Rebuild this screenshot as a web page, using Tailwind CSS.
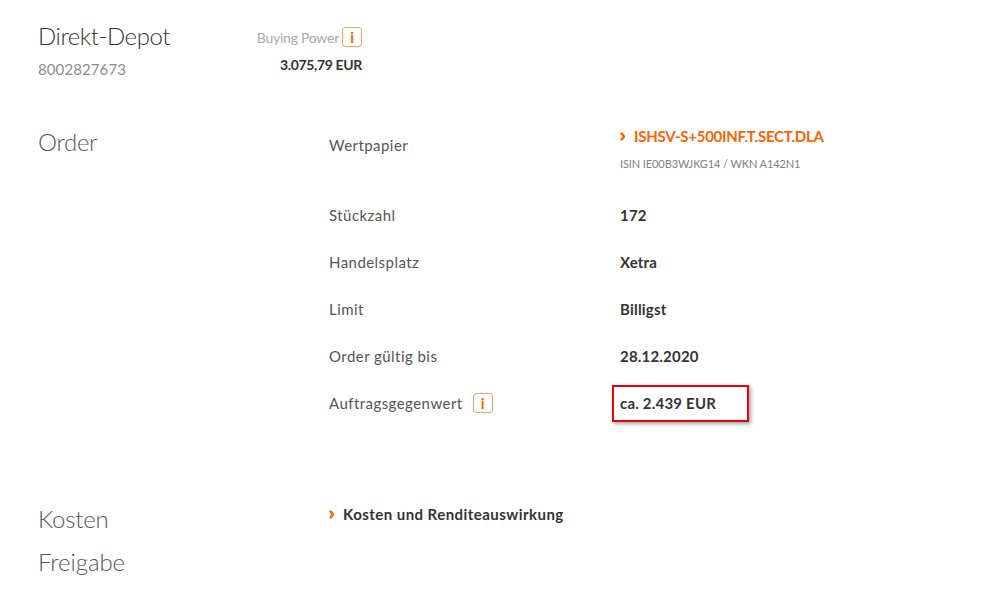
<!DOCTYPE html>
<html lang="de"><head><meta charset="utf-8"><script src="https://cdn.jsdelivr.net/npm/@tailwindcss/browser@4"></script></head>
<body class="bg-white">
<div class="w-[1000px] h-[590px] overflow-hidden pl-[38px] font-['Lato','Noto_Sans',sans-serif] text-[#333]">
  <div class="flex pt-[20px] h-[112px]">
    <div class="w-[180px]">
      <div class="text-[24px] leading-[32px] font-light text-[#333] tracking-[-0.45px]">Direkt-Depot</div>
      <div class="text-[15px] leading-[20px] mt-[7px] text-[#8c8c8c] tracking-[0.1px]">8002827673</div>
    </div>
    <div class="w-[144px] flex flex-col items-end pt-[8px]">
      <div class="flex items-center h-[20px] mt-[-1px] gap-[3px] text-[14px] tracking-[-0.25px] text-[#a8a8a8]">Buying Power
        <span class="w-[20px] h-[20px] border border-[#ff6200]/60 rounded-[3px] flex items-center justify-center text-[#ff6200] font-bold text-[15px]">i</span></div>
      <div class="text-[14px] leading-[20px] mt-[8px] font-bold tracking-[-0.35px] text-[#333]">3.075,79 EUR</div>
    </div>
  </div>
  <div class="flex h-[373px] text-[15px] text-[#555] tracking-[0.45px]">
    <div class="w-[291px] text-[24px] leading-[32px] font-light text-[#555] tracking-[-0.3px] mt-[14px]">Order</div>
    <div class="grid grid-cols-[291px_1fr] grid-rows-[80px_repeat(5,47px)] content-start flex-1 leading-[20px]">
      <div class="pt-[23px]">Wertpapier</div>
      <div>
        <div class="flex items-center gap-[9px] text-[#ff6200] font-bold tracking-[-0.25px] mt-[14px]"><svg class="w-[5px] h-[9px]" viewBox="0 0 5 9" fill="none" stroke="#ff6200" stroke-width="2.4"><path d="M1 .8 4 4.5 1 8.2"/></svg>ISHSV-S+500INF.T.SECT.DLA</div>
        <div class="text-[11px] leading-[16px] text-[#808080] tracking-[-0.1px] mt-[10px]">ISIN IE00B3WJKG14 / WKN A142N1</div>
      </div>
      <div class="pt-[13px]">Stückzahl</div><div class="pt-[13px] font-bold text-[#333] tracking-[0.2px]">172</div>
      <div class="pt-[13px]">Handelsplatz</div><div class="pt-[13px] font-bold text-[#333] tracking-[0.2px]">Xetra</div>
      <div class="pt-[13px]">Limit</div><div class="pt-[13px] font-bold text-[#333] tracking-[0.2px]">Billigst</div>
      <div class="pt-[13px]">Order gültig bis</div><div class="pt-[13px] font-bold text-[#333] tracking-[0.2px]">28.12.2020</div>
      <div class="pt-[13px] flex items-start gap-[10px]">Auftragsgegenwert
        <span class="w-[20px] h-[20px] border border-[#ff6200]/60 rounded-[3px] flex items-center justify-center text-[#ff6200] font-bold text-[15px] tracking-normal">i</span></div>
      <div class="pt-[13px] font-bold text-[#333] tracking-[0.2px] relative">ca. 2.439 EUR
        <span class="absolute left-[-8px] top-[5px] w-[137px] h-[37px] border-2 border-[#e8000d] shadow-[2px_2px_4px_rgba(0,0,0,0.35)]"></span></div>
    </div>
  </div>
  <div class="flex">
    <div class="w-[291px]">
      <div class="text-[24px] leading-[32px] font-light text-[#555] tracking-[-0.2px] mt-[18px]">Kosten</div>
      <div class="text-[24px] leading-[32px] font-light text-[#555] tracking-[-0.1px] mt-[11px]">Freigabe</div>
    </div>
    <div class="flex items-center gap-[9px] h-[20px] mt-[19px] text-[15px] font-bold text-[#333] tracking-[0.45px]"><svg class="w-[5px] h-[9px]" viewBox="0 0 5 9" fill="none" stroke="#ff6200" stroke-width="2.4"><path d="M1 .8 4 4.5 1 8.2"/></svg>Kosten und Renditeauswirkung</div>
  </div>
</div>
</body></html>
